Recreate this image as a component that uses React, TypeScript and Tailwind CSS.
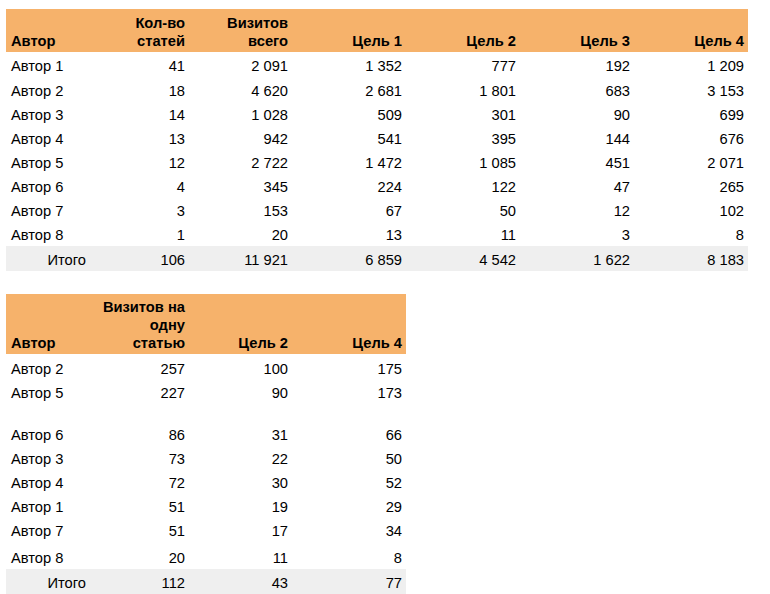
const font = { fontFamily: '"Liberation Sans", Arial, sans-serif' };

type Row = { name: string; vals: string[]; h: string };

const wide: Row[] = [
  { name: "Автор 1", vals: ["41", "2 091", "1 352", "777", "192", "1 209"], h: "h-[25px]" },
  { name: "Автор 2", vals: ["18", "4 620", "2 681", "1 801", "683", "3 153"], h: "h-[25px]" },
  { name: "Автор 3", vals: ["14", "1 028", "509", "301", "90", "699"], h: "h-[24px]" },
  { name: "Автор 4", vals: ["13", "942", "541", "395", "144", "676"], h: "h-[24px]" },
  { name: "Автор 5", vals: ["12", "2 722", "1 472", "1 085", "451", "2 071"], h: "h-[24px]" },
  { name: "Автор 6", vals: ["4", "345", "224", "122", "47", "265"], h: "h-[24px]" },
  { name: "Автор 7", vals: ["3", "153", "67", "50", "12", "102"], h: "h-[24px]" },
  { name: "Автор 8", vals: ["1", "20", "13", "11", "3", "8"], h: "h-[24px]" },
];

const perArticle: Row[] = [
  { name: "Автор 2", vals: ["257", "100", "175"], h: "h-[26px]" },
  { name: "Автор 5", vals: ["227", "90", "173"], h: "h-[24px]" },
  { name: "", vals: ["", "", ""], h: "h-[18px]" },
  { name: "Автор 6", vals: ["86", "31", "66"], h: "h-[24px]" },
  { name: "Автор 3", vals: ["73", "22", "50"], h: "h-[24px]" },
  { name: "Автор 4", vals: ["72", "30", "52"], h: "h-[24px]" },
  { name: "Автор 1", vals: ["51", "19", "29"], h: "h-[24px]" },
  { name: "Автор 7", vals: ["51", "17", "34"], h: "h-[24px]" },
  { name: "Автор 8", vals: ["20", "11", "8"], h: "h-[27px]" },
];

const cell = "pb-[2px] leading-[18px] whitespace-nowrap";

function Sheet({
  cols,
  width,
  head,
  headH,
  rows,
  total,
}: {
  cols: string;
  width: string;
  head: React.ReactNode[];
  headH: string;
  rows: Row[];
  total: string[];
}) {
  return (
    <div className={`${width} text-[14.7px] text-black`} style={font}>
      {/* шапка */}
      <div className={`grid ${cols} ${headH} items-end bg-[#f6b26b] font-bold`}>
        {head.map((h, i) => (
          <div key={i} className={`${cell} ${i === 0 ? "pl-[5px]" : "pr-[4px] text-right"}`}>
            {h}
          </div>
        ))}
      </div>
      {rows.map((r, ri) => (
        <div key={ri} className={`grid ${cols} ${r.h} items-end`}>
          <div className={`${cell} pl-[5px]`}>{r.name}</div>
          {r.vals.map((v, i) => (
            <div key={i} className={`${cell} pr-[4px] text-right`}>
              {v}
            </div>
          ))}
        </div>
      ))}
      {/* итого */}
      <div className={`grid ${cols} h-[25px] items-end bg-[#efefef]`}>
        <div className={`${cell} pr-[4px] text-right`}>Итого</div>
        {total.map((v, i) => (
          <div key={i} className={`${cell} pr-[4px] text-right`}>
            {v}
          </div>
        ))}
      </div>
    </div>
  );
}

export default function App() {
  return (
    <div className="min-h-[594px] w-[770px] bg-white pl-[6px] pt-[9px]">
      <Sheet
        cols="grid-cols-[84px_99px_103px_114px_114px_114px_114px]"
        width="w-[742px]"
        headH="h-[43px]"
        head={[
          "Автор",
          <>Кол-во<br />статей</>,
          <>Визитов<br />всего</>,
          "Цель 1",
          "Цель 2",
          "Цель 3",
          "Цель 4",
        ]}
        rows={wide}
        total={["106", "11 921", "6 859", "4 542", "1 622", "8 183"]}
      />
      <div className="h-[23px]" />
      <Sheet
        cols="grid-cols-[84px_99px_103px_114px]"
        width="w-[400px]"
        headH="h-[60px]"
        head={[
          "Автор",
          <>Визитов на<br />одну<br />статью</>,
          "Цель 2",
          "Цель 4",
        ]}
        rows={perArticle}
        total={["112", "43", "77"]}
      />
    </div>
  );
}
